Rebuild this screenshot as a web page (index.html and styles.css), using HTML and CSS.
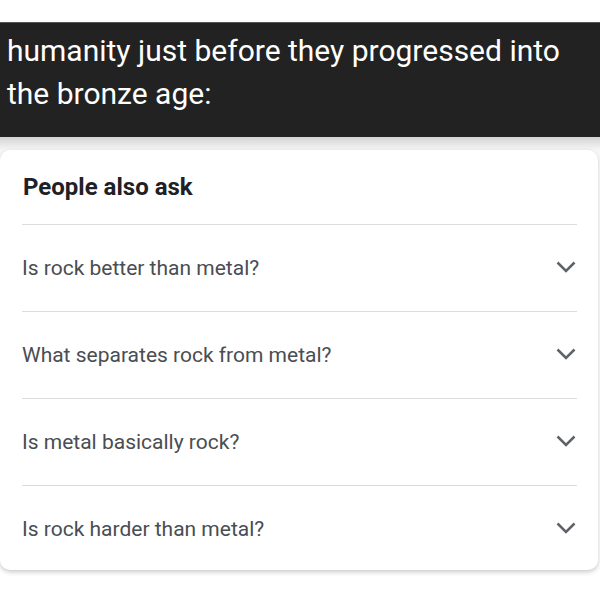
FILE: index.html
```html
<!DOCTYPE html>
<html lang="en">
<head>
    <meta charset="UTF-8">
    <meta name="viewport" content="width=device-width, initial-scale=1.0">
    <title>People also ask</title>
    <link rel="stylesheet" href="styles.css">
</head>
<body>
    <div class="caption">
        <p>humanity just before they progressed into the bronze age:</p>
    </div>
    <div class="results">
        <div class="card">
            <div class="card-title">People also ask</div>
            <div class="question">
                <span>Is rock better than metal?</span>
                <svg class="chevron" width="20" height="12" viewBox="0 0 20 12"><polyline points="1.5,1.5 10,10 18.5,1.5" /></svg>
            </div>
            <div class="question">
                <span>What separates rock from metal?</span>
                <svg class="chevron" width="20" height="12" viewBox="0 0 20 12"><polyline points="1.5,1.5 10,10 18.5,1.5" /></svg>
            </div>
            <div class="question">
                <span>Is metal basically rock?</span>
                <svg class="chevron" width="20" height="12" viewBox="0 0 20 12"><polyline points="1.5,1.5 10,10 18.5,1.5" /></svg>
            </div>
            <div class="question">
                <span>Is rock harder than metal?</span>
                <svg class="chevron" width="20" height="12" viewBox="0 0 20 12"><polyline points="1.5,1.5 10,10 18.5,1.5" /></svg>
            </div>
        </div>
    </div>
</body>
</html>
```

FILE: styles.css
```css
body {
    margin: 0;
    padding: 22px 0 0;
    background-color: #fff;
    font-family: Roboto, "Liberation Sans", sans-serif;
}
.caption {
    background-color: #222;
    color: #fff;
    height: 115px;
    padding: 6px 20px 0 7px;
    box-sizing: border-box;
    border-top: 1px solid #555;
}
.caption p {
    margin: 0;
    font-size: 30px;
    line-height: 43px;
}
.results {
    padding-top: 13px;
    background: linear-gradient(#d4d4d4, #f6f6f6 13px, #fff 30px);
    padding-bottom: 30px;
}
.card {
    margin: 0 2px 0 0;
    height: 420px;
    background-color: #fff;
    border-radius: 10px;
    box-shadow: 0 2px 5px rgba(0, 0, 0, 0.22);
    padding: 0 21px 0 22px;
}
.card-title {
    height: 74px;
    display: flex;
    align-items: center;
    font-size: 24px;
    font-weight: bold;
    color: #202124;
    padding-left: 1px;
}
.question {
    height: 87px;
    display: flex;
    align-items: center;
    justify-content: space-between;
    border-top: 1px solid #dadce0;
    box-sizing: border-box;
    font-size: 21px;
    color: #4a4d52;
}
.chevron {
    margin-right: 1px;
    margin-top: -2px;
}
.chevron polyline {
    fill: none;
    stroke: #5f6368;
    stroke-width: 2.5;
}
```
